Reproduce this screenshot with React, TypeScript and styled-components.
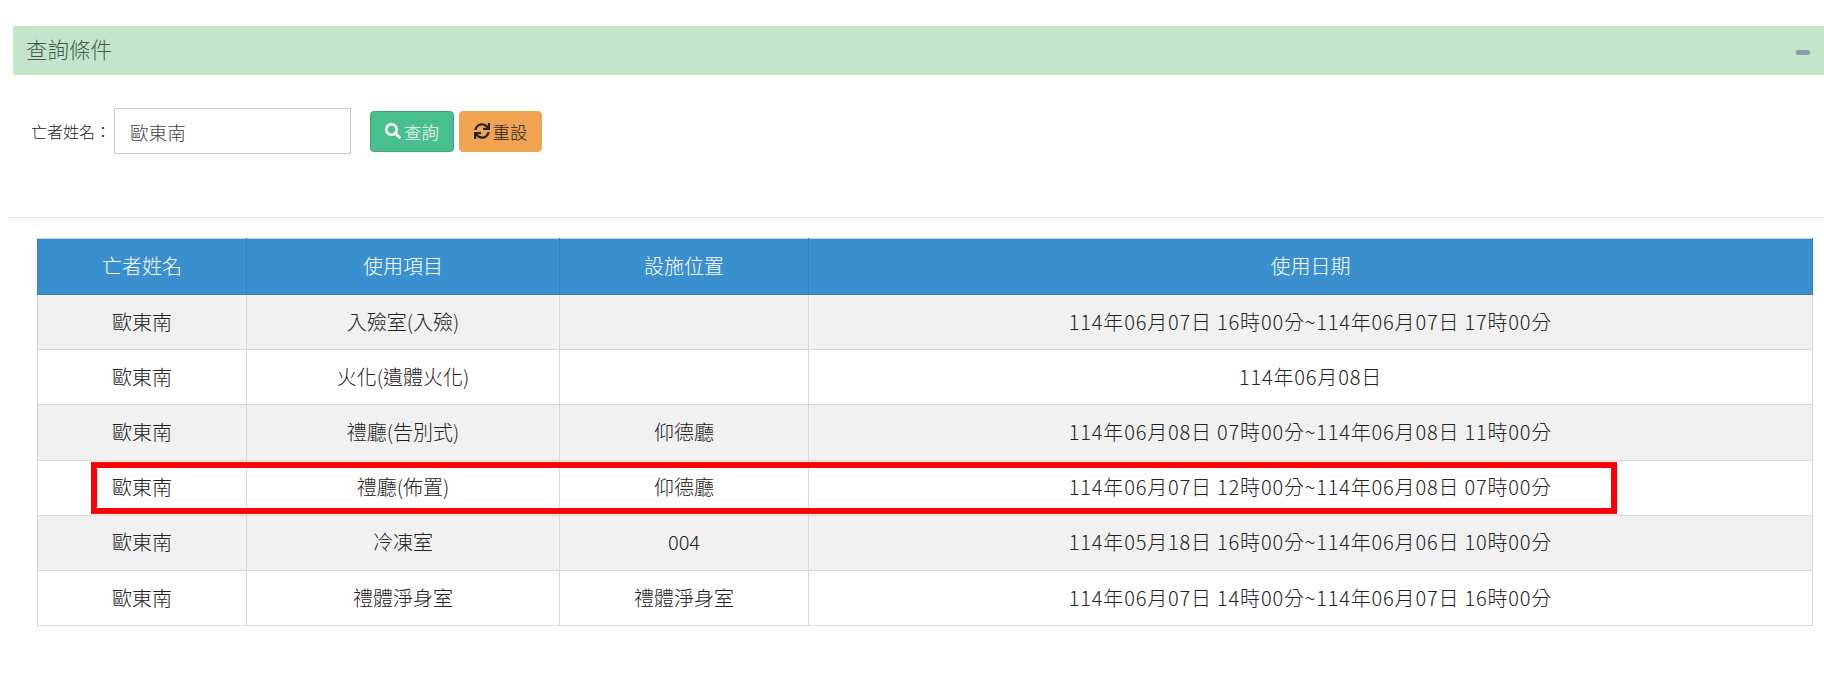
import styled, { createGlobalStyle } from 'styled-components';
import { FaSearch, FaSync } from 'react-icons/fa';

const rows = [
  { item: '入殮室(入殮)', place: '', date: '114年06月07日 16時00分~114年06月07日 17時00分' },
  { item: '火化(遺體火化)', place: '', date: '114年06月08日' },
  { item: '禮廳(告別式)', place: '仰德廳', date: '114年06月08日 07時00分~114年06月08日 11時00分' },
  { item: '禮廳(佈置)', place: '仰德廳', date: '114年06月07日 12時00分~114年06月08日 07時00分' },
  { item: '冷凍室', place: '004', date: '114年05月18日 16時00分~114年06月06日 10時00分' },
  { item: '禮體淨身室', place: '禮體淨身室', date: '114年06月07日 14時00分~114年06月07日 16時00分' },
];

export default function App() {
  return (
    <>
      <GlobalStyle />
      <Page>
        <PanelHeader>
          <PanelTitle>查詢條件</PanelTitle>
          <Collapse />
        </PanelHeader>
        <SearchForm>
          <FieldLabel>亡者姓名：</FieldLabel>
          <NameInput defaultValue="歐東南" />
          <Buttons>
            <ActionButton $kind="search" type="button">
              <FaSearch />
              查詢
            </ActionButton>
            <ActionButton $kind="reset" type="button">
              <FaSync />
              重設
            </ActionButton>
          </Buttons>
        </SearchForm>
        <Divider />
        <TableWrap>
          <ResultTable>
            <colgroup>
              <col width={209} />
              <col width={313} />
              <col width={249} />
              <col />
            </colgroup>
            <thead>
              <tr>
                <th>亡者姓名</th>
                <th>使用項目</th>
                <th>設施位置</th>
                <th>使用日期</th>
              </tr>
            </thead>
            <tbody>
              {rows.map((row) => (
                <tr key={row.item}>
                  <td>歐東南</td>
                  <td>{row.item}</td>
                  <td>{row.place}</td>
                  <td>{row.date}</td>
                </tr>
              ))}
            </tbody>
          </ResultTable>
          <Highlight />
        </TableWrap>
      </Page>
    </>
  );
}

const GlobalStyle = createGlobalStyle`
  body {
    margin: 0;
    background: #fff;
    color: #222;
    font-family: "Noto Sans CJK TC", "Liberation Sans", sans-serif;
    font-weight: 300;
  }
`;

const Page = styled.div`
  padding-top: 26px;
  height: 651px;
  overflow: hidden;
`;

const PanelHeader = styled.div`
  margin-left: 13px;
  height: 49px;
  padding: 0 14px 0 13px;
  background: #c3e6cb;
  display: flex;
  align-items: center;
  justify-content: space-between;
`;

const PanelTitle = styled.h3`
  margin: 0 0 4px;
  font-size: 21.5px;
  font-weight: 300;
  color: #46564c;
`;

const Collapse = styled.span`
  width: 14px;
  height: 5px;
  margin-top: 3px;
  border-radius: 2px;
  background: #8d9aa8;
`;

const SearchForm = styled.div`
  display: flex;
  align-items: center;
  height: 46px;
  margin-top: 33px;
  padding-left: 31px;
`;

const FieldLabel = styled.label`
  width: 83px;
  font-size: 16px;
  color: #222;
  white-space: nowrap;
`;

const NameInput = styled.input`
  box-sizing: border-box;
  width: 237px;
  height: 46px;
  padding: 0 15px;
  border: 1px solid #ccc;
  font: inherit;
  font-size: 18.6px;
  color: #444;
  outline: none;
`;

const Buttons = styled.div`
  display: flex;
  gap: 5px;
  margin-left: 19px;
`;

const ActionButton = styled.button<{ $kind: 'search' | 'reset' }>`
  display: flex;
  align-items: center;
  justify-content: center;
  gap: 3px;
  box-sizing: border-box;
  width: ${(p) => (p.$kind === 'search' ? '84px' : '83px')};
  height: 41px;
  padding: 0;
  border-radius: 4px;
  border: 1px solid ${(p) => (p.$kind === 'search' ? '#3da07f' : '#eea551')};
  background: ${(p) => (p.$kind === 'search' ? '#48bf8e' : '#f0a452')};
  color: ${(p) => (p.$kind === 'search' ? '#fff' : '#222')};
  font: inherit;
  font-size: 17.5px;
  svg {
    width: 16px;
    height: 16px;
  }
`;

const Divider = styled.hr`
  margin: 63px 0 0 7px;
  border: none;
  border-top: 1px solid #e5e5e5;
`;

const TableWrap = styled.div`
  position: relative;
  margin: 20px 11px 0 37px;
`;

const ResultTable = styled.table`
  width: 100%;
  table-layout: fixed;
  border-collapse: collapse;
  font-size: 20px;
  text-align: center;

  th,
  td {
    box-sizing: border-box;
    padding: 0 0 2px;
  }

  th {
    height: 56px;
    background: #3a90cf;
    border: 1px solid #3a80b4;
    border-top-color: #b9d8ee;
    color: #fff;
    font-weight: 300;
  }

  td {
    height: 55.2px;
    border: 1px solid #d8d8d8;
    color: #222;
  }

  td:last-child {
    letter-spacing: 0.81px;
  }

  tbody tr:nth-child(odd) td {
    background: #f1f1f1;
  }
`;

const Highlight = styled.div`
  position: absolute;
  left: 54px;
  top: 224px;
  width: 1526px;
  height: 52px;
  box-sizing: border-box;
  border: 6px solid #f00;
  pointer-events: none;
`;
